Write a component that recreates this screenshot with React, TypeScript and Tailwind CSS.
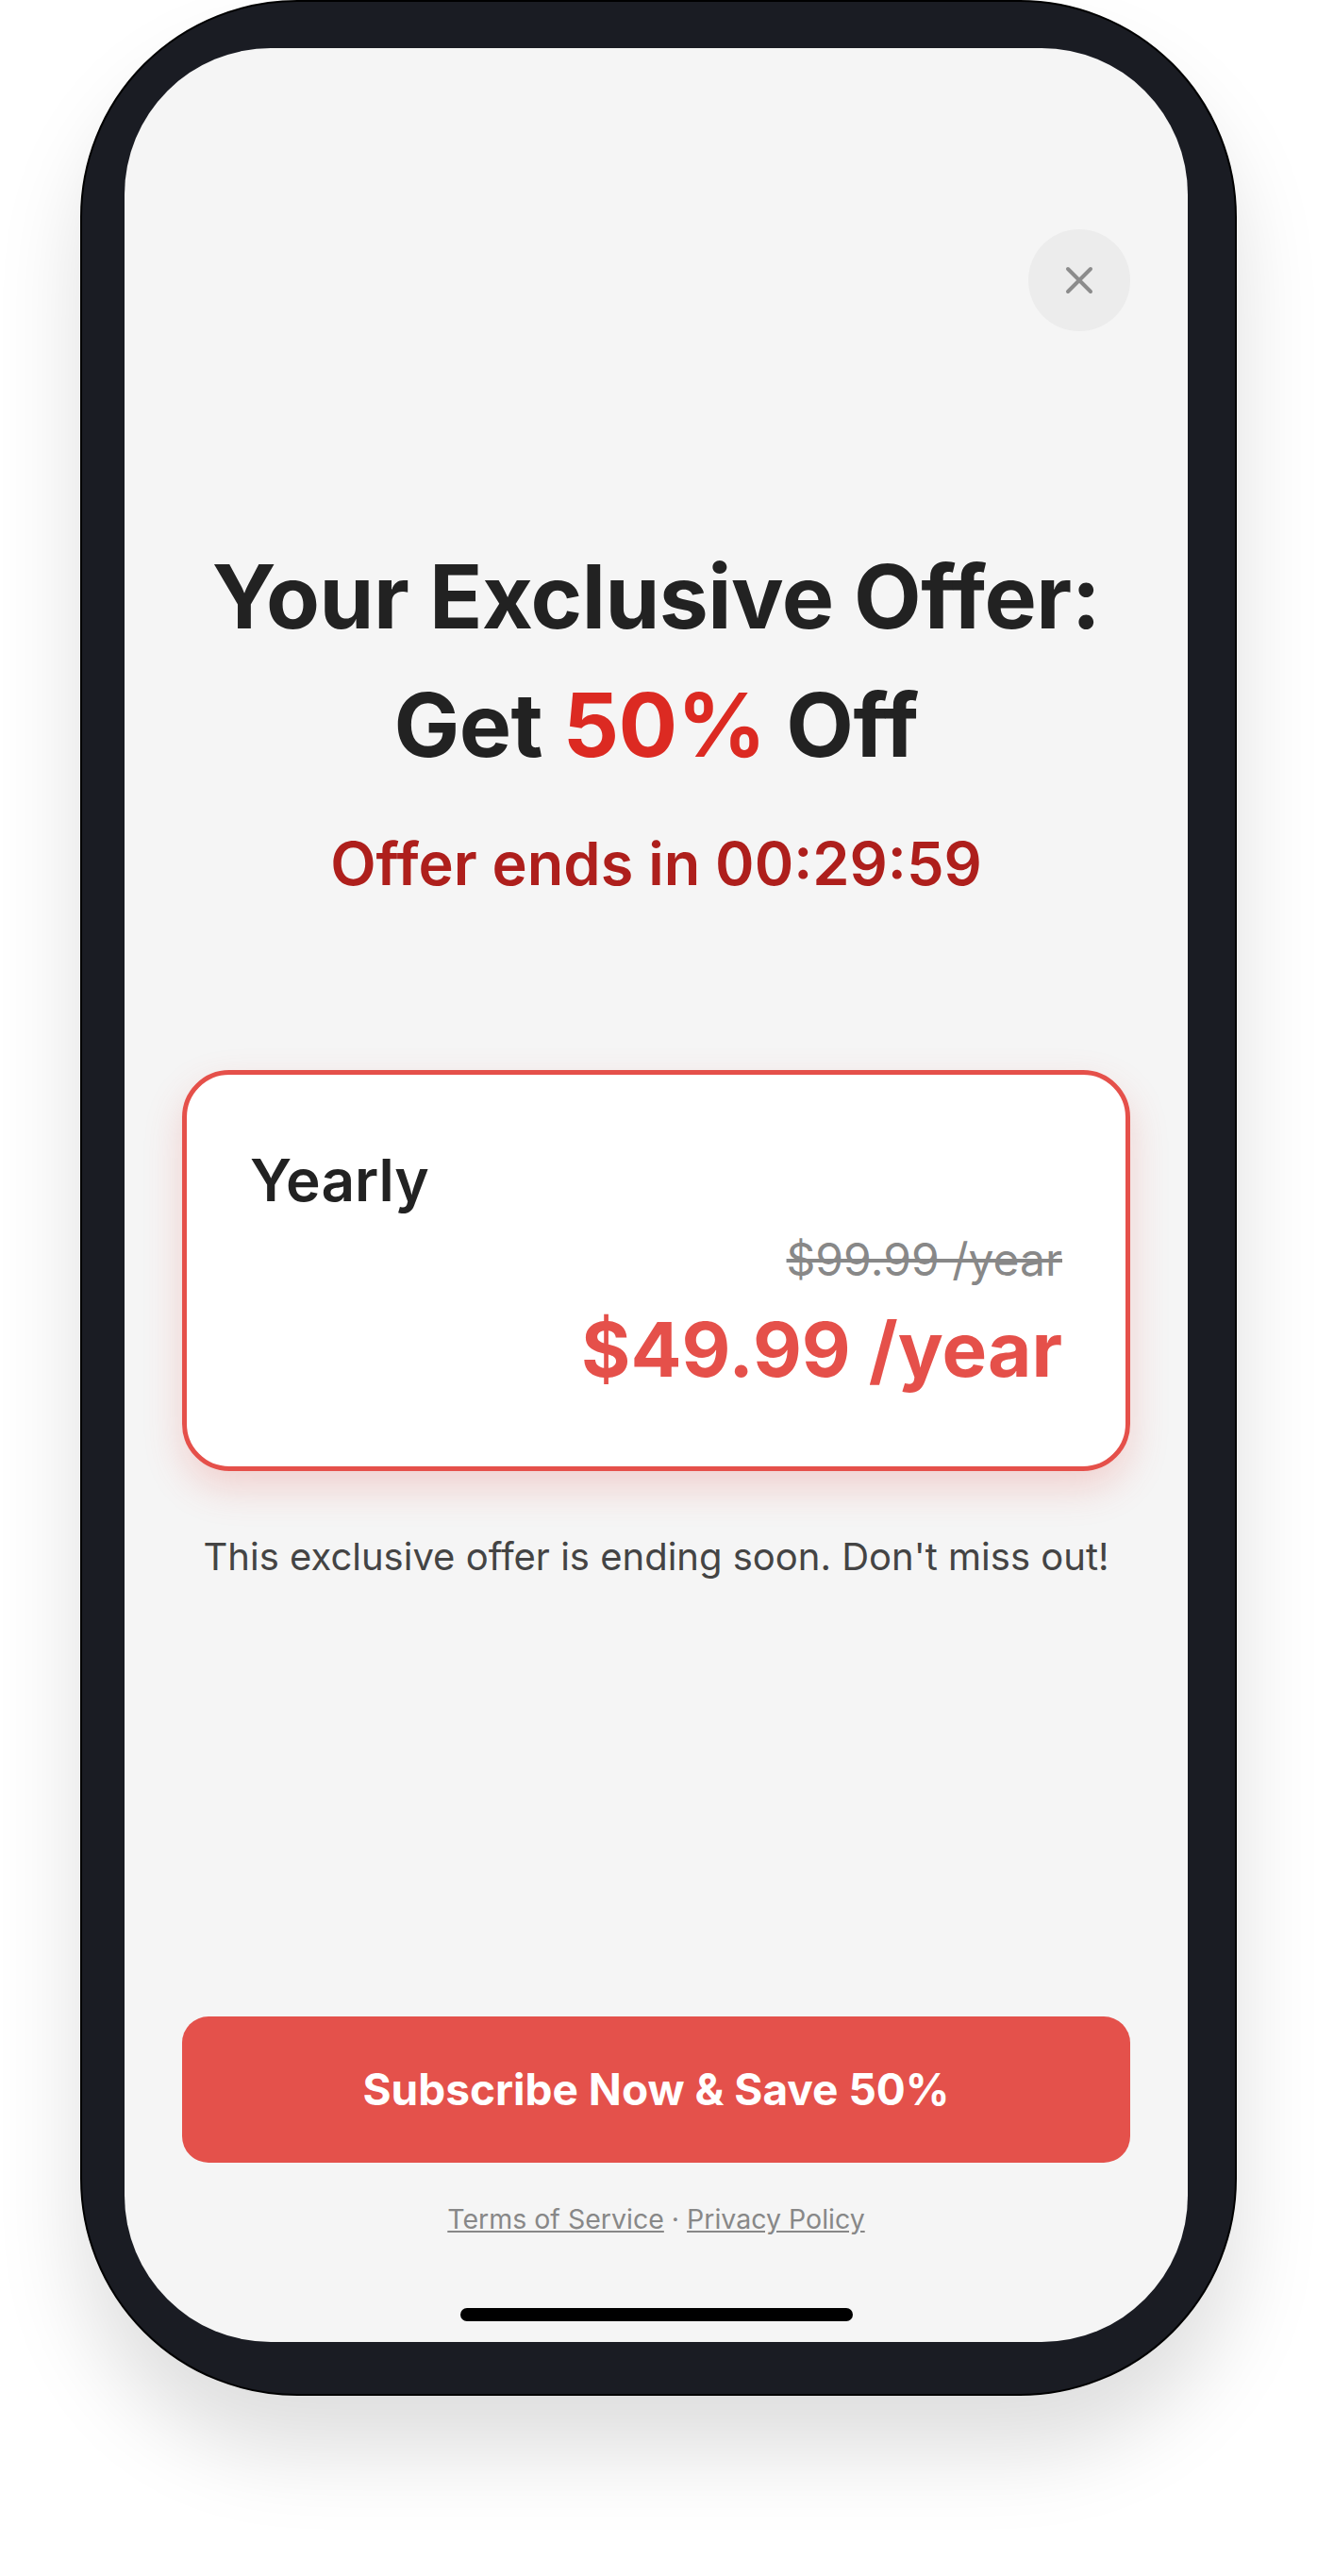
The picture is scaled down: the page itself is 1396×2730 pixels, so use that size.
import React from "react";

function CloseIcon() {
  return (
    <svg width="30" height="30" viewBox="0 0 30 30" fill="none">
      <path d="M3 3L27 27M27 3L3 27" stroke="#8c8c8c" strokeWidth="4" strokeLinecap="round" />
    </svg>
  );
}

export default function App() {
  return (
    <div className="min-h-[2730px] w-full bg-white" style={{ fontFamily: "Inter, 'Noto Sans', sans-serif" }}>
      {/* Phone frame */}
      <div className="mx-auto w-[1226px] h-[2539px] rounded-[230px] border-2 border-black bg-[#1a1c23] pt-[49px] pb-[55px] pl-[45px] pr-[50px] shadow-[0_60px_90px_rgba(0,0,0,0.13)]">
        {/* Screen */}
        <div className="flex h-full flex-col rounded-[155px] bg-[#f5f5f5] px-[61px] overflow-hidden">
          {/* Close */}
          <div className="flex justify-end pt-[192px]">
            <button className="flex h-[108px] w-[108px] items-center justify-center rounded-full bg-[#ececec]">
              <CloseIcon />
            </button>
          </div>

          {/* Headline */}
          <h1 className="mt-[213px] text-center text-[93px] font-bold leading-[136px] text-[#222222] tracking-[-0.5px]">
            Your Exclusive Offer:
            <br />
            Get <span className="text-[#dc2a22]">50%</span> Off
          </h1>
          <p className="mt-[41px] text-center text-[63px] font-semibold leading-[77px] text-[#ae1f1c]">
            Offer ends in 00:29:59
          </p>

          {/* Plan card */}
          <div className="mt-[180px] h-[425px] rounded-[50px] border-[5px] border-[#e5504a] bg-white px-[67px] py-[75px] shadow-[0_18px_40px_rgba(229,80,74,0.22)]">
            <div className="text-[62px] font-semibold leading-[74px] text-[#222222]">Yearly</div>
            <div className="mt-[18px] text-right text-[48px] leading-[58px] text-[#888888] line-through">
              $99.99 /year
            </div>
            <div className="mt-[18px] text-right text-[80px] font-bold leading-[96px] text-[#e5504a]">
              $49.99 /year
            </div>
          </div>

          <p className="mt-[63px] text-center text-[40px] leading-[56px] text-[#444444]">
            This exclusive offer is ending soon. Don't miss out!
          </p>

          <div className="flex-1" />

          {/* CTA */}
          <button className="h-[155px] w-full rounded-[28px] bg-[#e4514b] text-[46px] font-bold text-white">
            Subscribe Now &amp; Save 50%
          </button>

          <div className="mt-[39px] text-center text-[28.5px] leading-[41px] text-[#888888]">
            <a className="underline">Terms of Service</a> · <a className="underline">Privacy Policy</a>
          </div>

          {/* Home indicator */}
          <div className="mb-[22px] mt-[74px] flex justify-center">
            <div className="h-[14px] w-[416px] rounded-full bg-black" />
          </div>
        </div>
      </div>
    </div>
  );
}
